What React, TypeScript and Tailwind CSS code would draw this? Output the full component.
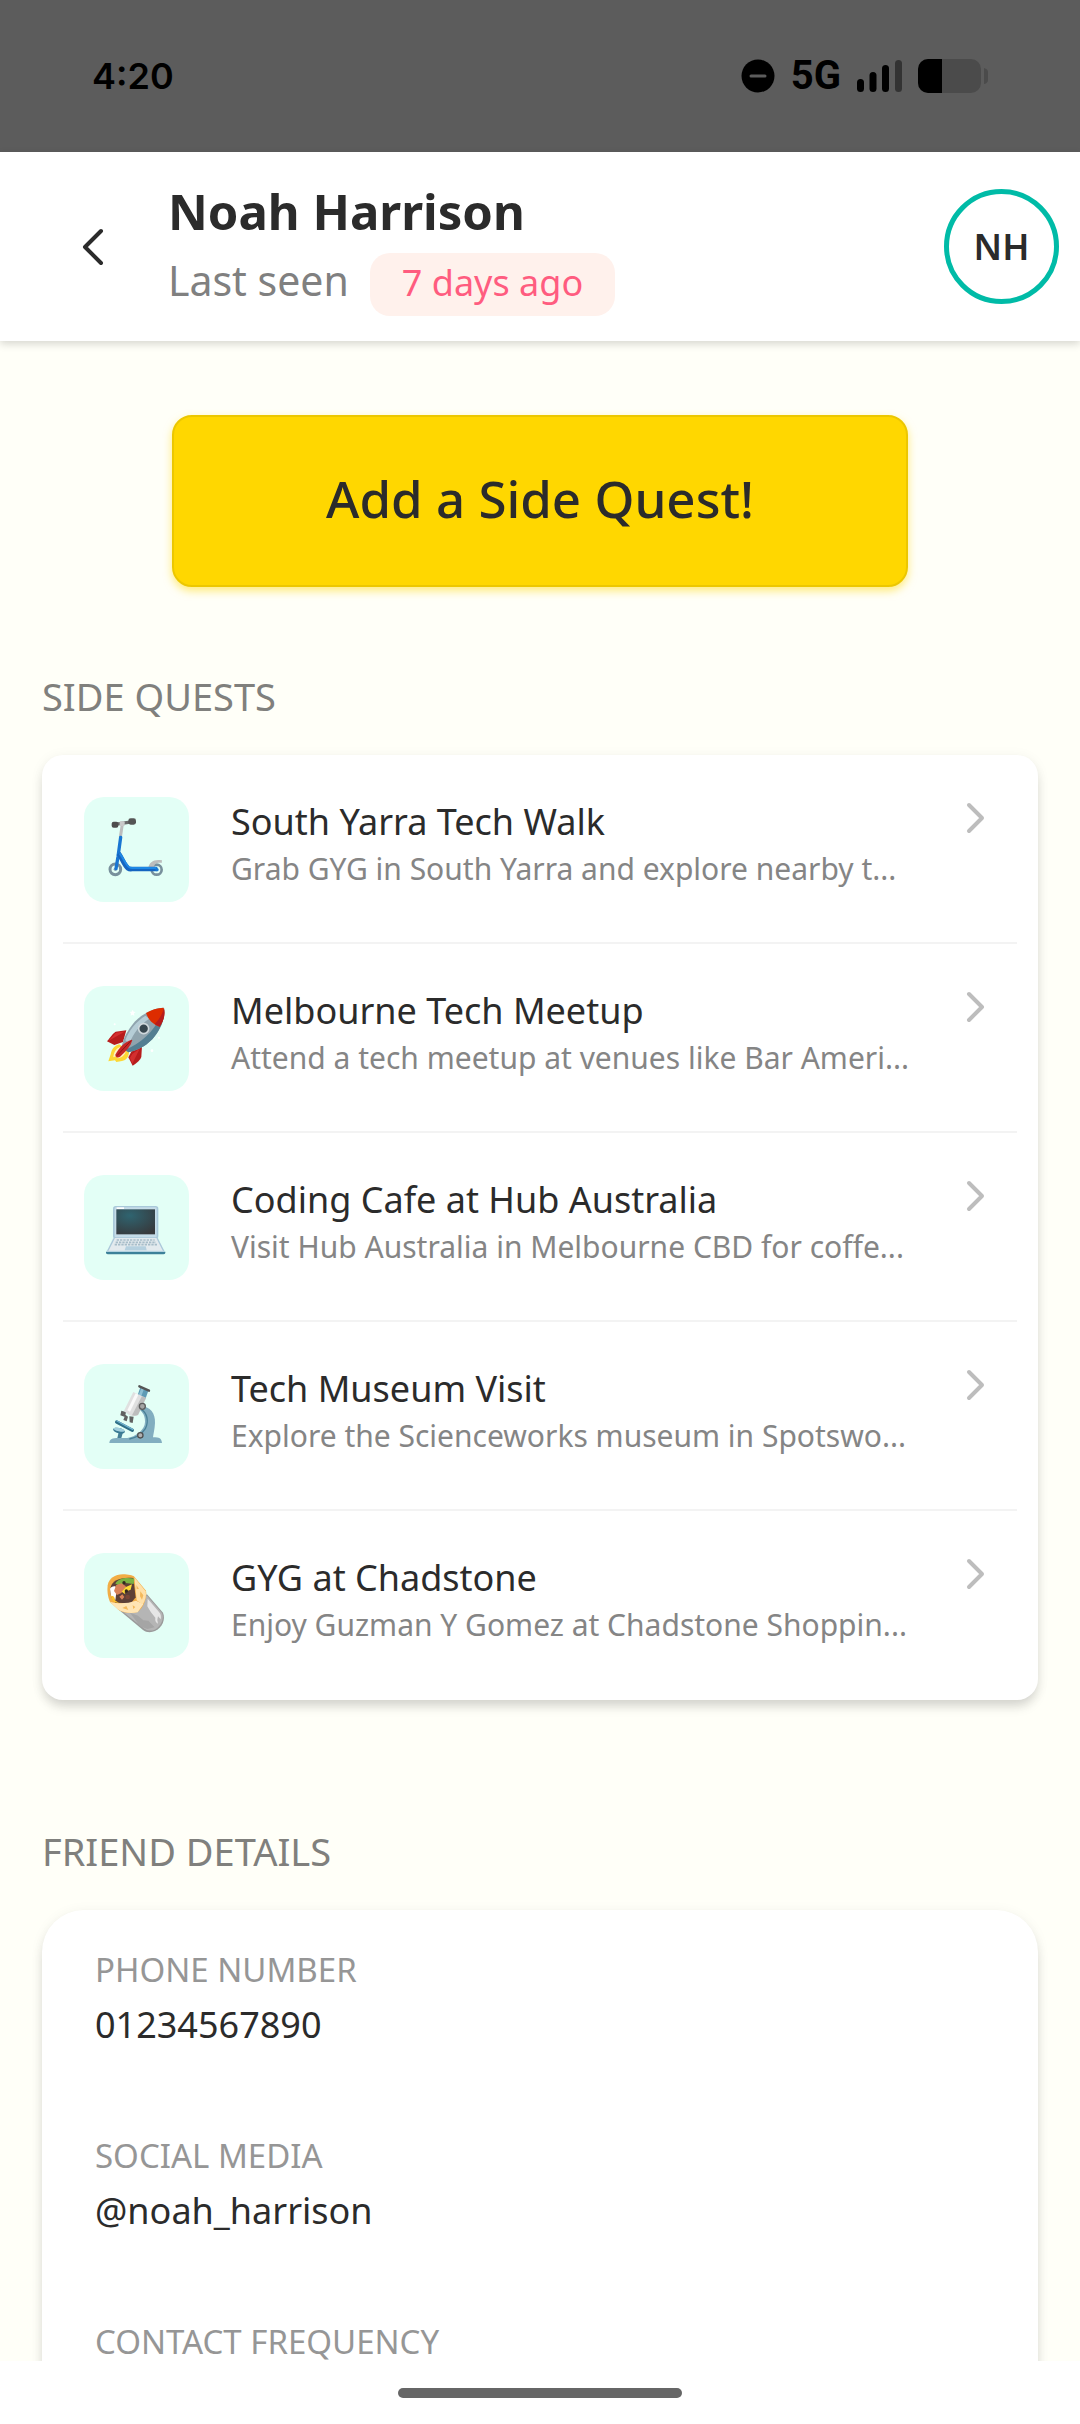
import type { ReactNode } from 'react'

interface Quest {
  title: string
  description: string
  icon: ReactNode
}

interface Detail {
  label: string
  value?: string
}

function ScooterIcon() {
  return (
    <svg viewBox="12 21 315 315" className="size-full" aria-hidden="true">
      <path d="M127 103 121 142" stroke="#bdbdbd" strokeWidth="9" />
      <path d="M104 103 160 95" stroke="#6b6b6b" strokeWidth="10" />
      <rect x="95" y="95" width="20" height="18" rx="6" fill="#4d4d4d" />
      <rect x="145" y="85" width="23" height="19" rx="7" fill="#555" />
      <rect x="119" y="94" width="15" height="14" rx="3" fill="#c9c9c9" />
      <circle cx="106" cy="238" r="16" fill="none" stroke="#78909c" strokeWidth="9" />
      <circle cx="230" cy="239" r="15" fill="none" stroke="#78909c" strokeWidth="8" />
      <circle cx="106" cy="238" r="5" fill="#90a4ae" />
      <path d="M205 234c2-18 18-28 41-23l-1 8c-16-2-22 3-24 15z" fill="#bdbdbd" />
      <path d="M122 142 114 200 108 236" fill="none" stroke="#1976d2" strokeWidth="10" strokeLinecap="round" />
      <path d="M116 190c12 18 16 35 28 45q4 3 12 2h76" fill="none" stroke="#1565c0" strokeWidth="14" />
      <path d="M119 190c12 16 18 33 28 41q4 3 10 3h73" fill="none" stroke="#1e88e5" strokeWidth="6" />
      <circle cx="231" cy="239" r="5" fill="#1976d2" />
    </svg>
  )
}

function RocketIcon() {
  return (
    <svg viewBox="12 17 315 315" className="size-full" aria-hidden="true">
      <path d="m158 88 3 6 6 1-5 4 1 7-6-3-5 3 1-7-4-4 6-1z" fill="#fff" />
      <circle cx="104" cy="132" r="3" fill="#fff" />
      <circle cx="237" cy="172" r="3" fill="#fff" />
      <circle cx="216" cy="211" r="4" fill="#fff" />
      <path d="M118 192c-14 4-22 12-26 30l-7 21 20-3 4 5 17-3c14-2 20-12 21-26z" fill="#fdd835" />
      <path d="M120 200c-12 5-18 14-20 31l8-3 5 6c12-3 20-8 24-20z" fill="#fff3c4" />
      <path d="M139 150 107 154c-5 2-15 15-26 29l22 11 26-9z" fill="#b71c1c" />
      <path d="m136 153-28 4-23 25z" fill="#d32f2f" />
      <path d="m186 198-2 32c-2 8-12 17-26 26l-13-25 12-23z" fill="#b71c1c" />
      <path d="m180 204-23 17-7 11 7 18z" fill="#d32f2f" />
      <path d="M125 201c4-27 18-52 39-77 25-25 56-41 86-42 6 31-8 66-33 95-22 22-46 34-72 39z" fill="#90a4ae" />
      <path d="M252 85c4 30-10 63-35 92-22 22-46 34-72 39l-10-8c53-20 94-61 117-123z" fill="#547f92" />
      <path d="M136 180c10-29 31-54 60-74l12 9c-28 18-48 42-60 76z" fill="#b6cdd6" />
      <path d="M198 98c15-10 34-15 53-16 5 20 0 38-12 57-18-5-34-20-41-41z" fill="#dd2c00" />
      <path d="M252 83c5 20-1 38-13 56l-15-8c14-14 23-30 28-48z" fill="#b71c1c" />
      <circle cx="191" cy="145" r="15" fill="#37474f" stroke="#cfd8dc" strokeWidth="5" />
      <path d="M155 178c-21 7-37 22-49 45 0 8 8 11 14 6 19-16 32-32 37-49z" fill="#c62828" />
      <path d="m153 181-42 45" stroke="#8e1515" strokeWidth="3" />
    </svg>
  )
}

function LaptopIcon() {
  return (
    <svg viewBox="12 14 315 315" className="size-full" aria-hidden="true">
      <defs>
        <radialGradient id="laptop-screen" cx="35%" cy="25%" r="85%">
          <stop offset="0" stopColor="#2f6470" />
          <stop offset="1" stopColor="#37393c" />
        </radialGradient>
      </defs>
      <rect x="99" y="107" width="136" height="98" rx="8" fill="#a9c9da" />
      <rect x="104" y="111" width="126" height="90" rx="4" fill="#c5dce8" />
      <rect x="110" y="111" width="22" height="5" fill="#fff" />
      <rect x="109" y="117" width="116" height="75" fill="url(#laptop-screen)" />
      <path d="M99 203h135l21 44H79z" fill="#e3eaee" />
      <path d="M103 203 83 242" stroke="#a9c9da" strokeWidth="4" />
      <path d="m231 203 20 39" stroke="#a9c9da" strokeWidth="4" />
      <path d="M110 209h114M107 216h121M104 223h127" stroke="#a8bdc9" strokeWidth="5" strokeDasharray="7 3" />
      <path d="M138 228h59l3 12h-66z" fill="#b5d0df" />
      <path d="M78 244h178v4q-1 4-6 4H84q-5 0-6-4z" fill="#3c8199" />
      <path d="M79 243h176" stroke="#b4d3e0" strokeWidth="3" />
    </svg>
  )
}

function MicroscopeIcon() {
  return (
    <svg viewBox="12 17 315 315" className="size-full" aria-hidden="true">
      <path d="M181 144c30 0 46 22 44 50-1 20-5 34-6 43 20 0 25 3 27 17H88c1-12 8-15 28-15h26c23-3 53-24 53-48 0-18-5-28-19-39z" fill="#82aec0" />
      <path d="M184 153c18 11 23 37 12 58-14 22-31 28-48 31" fill="none" stroke="#498197" strokeWidth="4" />
      <path d="m110 191 47 25" stroke="#2f6f87" strokeWidth="10" strokeLinecap="round" />
      <path d="m111 188 47 25" stroke="#72b4d0" strokeWidth="4" strokeLinecap="round" />
      <path d="M116 222h13l-5 17h-12z" fill="#447f96" />
      <ellipse cx="117" cy="217" rx="18" ry="8" transform="rotate(14 117 217)" fill="#397a93" />
      <ellipse cx="117" cy="214" rx="16" ry="5" transform="rotate(14 117 214)" fill="#a2cfdd" />
      <path d="m124 157 14 4-3 15-14-5zM136 169l8 6-4 14-10-4zM148 174l13 1-3 19-9-2z" fill="#616161" />
      <path d="m181 87 24 10-9 26-24-10z" fill="#5e9bb5" />
      <path d="m184 89 8 3-9 24-8-3z" fill="#8ec0d3" />
      <path d="m178 84 29 13" stroke="#555" strokeWidth="7" strokeLinecap="round" />
      <path d="m160 101 38 18-24 51q-22 10-42-13z" fill="#e0e0e0" />
      <path d="m186 113 12 6-24 51q-9 4-18 1z" fill="#bdbdbd" />
      <path d="m167 105 8 4-25 51-8-4z" fill="#fafafa" />
      <circle cx="187" cy="144" r="9" fill="#a5a5a5" stroke="#5d5d5d" strokeWidth="4" />
      <circle cx="181" cy="231" r="8" fill="#b0b0b0" stroke="#505050" strokeWidth="4" />
    </svg>
  )
}

function BurritoIcon() {
  return (
    <svg viewBox="12 14 315 315" className="size-full" aria-hidden="true">
      <path d="m201 138 48 55c8 19-1 44-24 55-11 5-26 5-36-3l-72-60z" fill="#9a9a9a" />
      <path d="m200 141 46 53c7 17-2 39-22 50-10 4-22 4-31-3l-70-55z" fill="#b5b5b5" />
      <path d="m203 151 34 40q8 9 5 22l-8-9q-4 10 0 22-10-5-8-18-14-14-24-34z" fill="#e6e6e6" />
      <path d="m150 193 24 9 16 14 15 1 19 20-22 5-22-8z" fill="#a5a5a5" />
      <path d="M83 111c3-20 22-33 46-33 16 0 29 3 34 7l35 42c4 19-7 50-25 64-18 5-41 4-57-6l-26-24c-7-15-9-33-7-50z" fill="#f2ad45" />
      <path d="M92 116c5-20 31-31 68-27l7 58-14 18-47-2c-12-10-18-28-14-47z" fill="#5d4037" />
      <path d="M106 106c8-14 27-20 57-15l-2 16-24-3-16 9z" fill="#7cb342" />
      <path d="M90 121c8-9 17-9 21-1l-5 35-13-12z" fill="#fff" />
      <path d="M93 142c8 0 12 4 12 14l12 8-13-2q-10-7-11-20z" fill="#fbc02d" />
      <path d="m108 111 16-6 14 9-14 20-13 6-9-12zM118 145l9-7 6 8-7 8z" fill="#d98258" />
      <path d="m136 117 20-9-4 16-18 7 2 7-11-8z" fill="#fdd835" />
      <circle cx="132" cy="103" r="5" fill="#33281f" />
      <circle cx="139" cy="128" r="5" fill="#33281f" />
      <circle cx="143" cy="146" r="7" fill="#7a4636" />
      <path d="m163 87 34 42c3 13-1 28-9 40l-18-13z" fill="#ffe0a8" />
      <path d="M90 160c27 7 50 6 78-3l22 11-17 24c-20 4-43 2-60-9z" fill="#ffe5b5" />
      <path d="m169 110 8 11-7 2zM181 129l9 12-4 13-6-10zM127 179l12-6 6 12zM158 171l8 5-6 6z" fill="#f4b95b" />
    </svg>
  )
}

const QUESTS: Quest[] = [
  {
    title: 'South Yarra Tech Walk',
    description: 'Grab GYG in South Yarra and explore nearby t...',
    icon: <ScooterIcon />,
  },
  {
    title: 'Melbourne Tech Meetup',
    description: 'Attend a tech meetup at venues like Bar Ameri...',
    icon: <RocketIcon />,
  },
  {
    title: 'Coding Cafe at Hub Australia',
    description: 'Visit Hub Australia in Melbourne CBD for coffe...',
    icon: <LaptopIcon />,
  },
  {
    title: 'Tech Museum Visit',
    description: 'Explore the Scienceworks museum in Spotswo...',
    icon: <MicroscopeIcon />,
  },
  {
    title: 'GYG at Chadstone',
    description: 'Enjoy Guzman Y Gomez at Chadstone Shoppin...',
    icon: <BurritoIcon />,
  },
]

const DETAILS: Detail[] = [
  { label: 'PHONE NUMBER', value: '01234567890' },
  { label: 'SOCIAL MEDIA', value: '@noah_harrison' },
  { label: 'CONTACT FREQUENCY' },
]

function StatusBar() {
  return (
    <div className="flex h-[152px] shrink-0 items-center justify-between bg-[#5c5c5c] px-[92px] text-black">
      <span className="font-['Inter',sans-serif] text-[36px] leading-[44px] font-semibold">4:20</span>
      <div className="flex items-center">
        <svg viewBox="0 0 34 34" className="size-[34px]" aria-label="Do not disturb">
          <circle cx="17" cy="17" r="16.5" />
          <path d="M10 17h14" stroke="#5c5c5c" strokeWidth="3" strokeLinecap="round" />
        </svg>
        <span className="ml-4 font-['Roboto',sans-serif] text-[40px] leading-[44px] font-bold">5G</span>
        <svg viewBox="0 0 46 34" className="ml-4 h-[34px] w-[46px]" aria-label="Signal">
          <rect x="0" y="20" width="7" height="13" rx="3.5" />
          <rect x="12.5" y="13" width="7" height="20" rx="3.5" />
          <rect x="25" y="6" width="7" height="27" rx="3.5" />
          <rect x="38" y="1" width="7" height="32" rx="3.5" fill="#333" />
        </svg>
        <svg viewBox="0 0 70 34" className="ml-[15px] h-[34px] w-[70px]" aria-label="Battery">
          <rect width="63" height="34" rx="10" fill="#4b4b4b" />
          <path d="M24 0v34H10A10 10 0 0 1 0 24V10A10 10 0 0 1 10 0z" />
          <path d="M66 9q4 1 4 4v8q0 3-4 4z" fill="#4b4b4b" />
        </svg>
      </div>
    </div>
  )
}

function ProfileHeader() {
  return (
    <header className="relative z-10 flex h-[189px] shrink-0 bg-white pr-[21px] shadow-[0_3px_8px_rgba(0,0,0,0.16)]">
      <button type="button" aria-label="Back" className="flex w-[168px] items-center pl-[81px]">
        <svg viewBox="0 0 24 38" className="h-[38px] w-6" fill="none" stroke="#2b2b2b" strokeWidth="4">
          <path d="M20 3 4 19l16 16" strokeLinecap="round" strokeLinejoin="round" />
        </svg>
      </button>
      <div className="min-w-0 flex-1 pt-[17px]">
        <h1 className="text-[49px] leading-[84px] font-bold">Noah Harrison</h1>
        <div className="flex items-start gap-[21px]">
          <span className="text-[41px] leading-[54px] text-[#808080]">Last seen</span>
          <span className="rounded-[20px] bg-[#fff1ec] px-8 pb-[3px] text-[36px] leading-[60px] text-[#ff5c7f]">
            7 days ago
          </span>
        </div>
      </div>
      <div className="flex size-[115px] shrink-0 items-center justify-center self-center rounded-full border-[5px] border-[#00bba7] text-[36px] leading-[44px] font-semibold">
        NH
      </div>
    </header>
  )
}

function SectionTitle({ children }: { children: ReactNode }) {
  return <h2 className="mb-[34px] text-[38px] leading-[50px] text-[#80807d]">{children}</h2>
}

function QuestRow({ quest }: { quest: Quest }) {
  return (
    <li className="border-b-2 border-[#f3f3f3] last:border-transparent">
      <a href="#quest" className="flex items-start px-[21px] pt-[42px] pb-10">
        <span className="size-[105px] shrink-0 overflow-hidden rounded-[20px] bg-[#e3fff6]">{quest.icon}</span>
        <span className="ml-[42px] flex min-w-0 flex-1 flex-col">
          <span className="text-[36px] leading-[50px]">{quest.title}</span>
          <span className="text-[30px] leading-[44px] whitespace-nowrap text-[#858585]">{quest.description}</span>
        </span>
        <svg viewBox="0 0 20 32" className="mt-[5px] mr-2.5 h-8 w-5 shrink-0" fill="none" stroke="#bdbdbd" strokeWidth="4">
          <path d="m3 3 13 13L3 29" strokeLinecap="round" strokeLinejoin="round" />
        </svg>
      </a>
    </li>
  )
}

export default function App() {
  return (
    <div className="flex h-screen flex-col bg-[#fffff8] font-['Noto_Sans',sans-serif] text-[#2b2b2b]">
      <StatusBar />
      <ProfileHeader />

      <main className="min-h-0 flex-1 overflow-y-auto px-[42px] pt-[74px] [scrollbar-width:none]">
        <button
          type="button"
          className="mx-auto block w-full max-w-[736px] rounded-[20px] border-2 border-[#ecc700] bg-[#ffd700] pt-[47px] pb-[53px] text-[51px] leading-[68px] font-medium shadow-[0_4px_8px_rgba(255,215,0,0.5)]"
        >
          Add a Side Quest!
        </button>

        <section className="mt-[84px]">
          <SectionTitle>SIDE QUESTS</SectionTitle>
          <ul className="rounded-[21px] bg-white px-[21px] shadow-[0_8px_12px_-2px_rgba(0,0,0,0.15),0_2px_14px_rgba(0,0,0,0.06)]">
            {QUESTS.map(quest => (
              <QuestRow key={quest.title} quest={quest} />
            ))}
          </ul>
        </section>

        <section className="mt-[126px]">
          <SectionTitle>FRIEND DETAILS</SectionTitle>
          <dl className="rounded-t-[42px] bg-white px-[53px] pt-[37px] shadow-[0_8px_12px_-2px_rgba(0,0,0,0.15),0_2px_14px_rgba(0,0,0,0.06)]">
            {DETAILS.map(detail => (
              <div key={detail.label} className="pb-[84px]">
                <dt className="text-[33px] leading-[46px] text-[#969696]">{detail.label}</dt>
                {detail.value && <dd className="mt-2 text-[36px] leading-[48px]">{detail.value}</dd>}
              </div>
            ))}
          </dl>
        </section>
      </main>

      <footer className="flex h-[63px] shrink-0 justify-center bg-white pt-[27px]">
        <div className="h-[10px] w-[284px] rounded-full bg-[#666]" />
      </footer>
    </div>
  )
}
